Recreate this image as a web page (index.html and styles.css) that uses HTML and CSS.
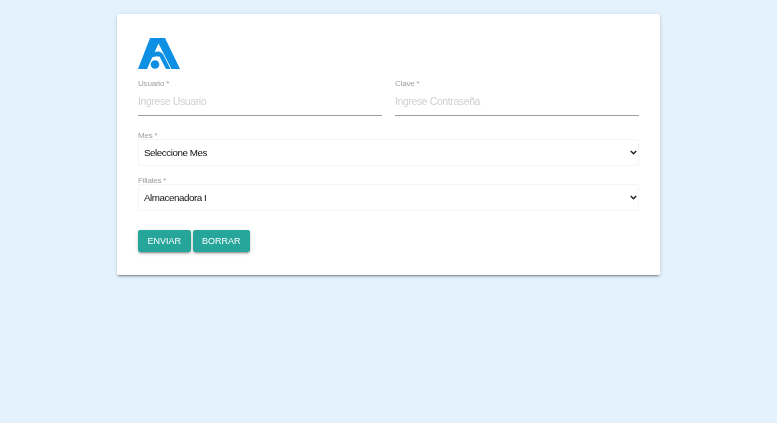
FILE: index.html
```html
<!DOCTYPE html>
<html lang="es">
<head>
<meta charset="utf-8">
<title>Ingreso</title>
<link rel="stylesheet" href="styles.css">
</head>
<body>
<main class="card">
  <svg class="logo" viewBox="0 0 42 31" aria-hidden="true">
    <path fill="#0d8fe3" d="M12 0H27L42 31H33.5L20.5 5.5L9 31H0Z"/>
    <path fill="#0d8fe3" d="M14 15.5Q17 13 21 13.5Q24 14 25.5 17L32.5 31H28L21.5 18.5H17.5Q15 18.5 12.8 20Z"/>
    <circle fill="#0d8fe3" cx="17" cy="26.5" r="4.3"/>
  </svg>
  <form class="form">
    <div class="row">
      <div class="field">
        <label class="label" for="u">Usuario *</label>
        <input class="input" id="u" type="text" placeholder="Ingrese Usuario">
      </div>
      <div class="field">
        <label class="label" for="c">Clave *</label>
        <input class="input" id="c" type="password" placeholder="Ingrese Contraseña">
      </div>
    </div>
    <div class="select-field first">
      <label class="label" for="m">Mes *</label>
      <select class="select" id="m"><option>Seleccione Mes</option></select>
    </div>
    <div class="select-field second">
      <label class="label" for="f">Filiales *</label>
      <select class="select" id="f"><option>Almacenadora I</option></select>
    </div>
    <div class="actions">
      <button class="btn" type="button">ENVIAR</button>
      <button class="btn" type="button">BORRAR</button>
    </div>
  </form>
</main>
</body>
</html>
```
FILE: styles.css
```css
* { box-sizing: border-box; }
html, body { margin: 0; height: 100%; }
body {
  background: #e3f2fd;
  font-family: "Liberation Sans", Arial, sans-serif;
  padding-top: 14px;
}
.card {
  width: 543px;
  height: 261px;
  margin-left: 117px;
  padding: 24px 21px 0;
  background: #fff;
  border-radius: 2px;
  box-shadow: 0 2px 2px 0 rgba(0,0,0,.14), 0 3px 1px -2px rgba(0,0,0,.2), 0 1px 5px 0 rgba(0,0,0,.12);
  filter: blur(.35px);
}
.logo { display: block; width: 42px; height: 31px; }
.row { display: grid; grid-template-columns: 244px 244px; column-gap: 13px; margin-top: 10px; }
.field { display: flex; flex-direction: column; }
.label { display: block; font-size: 8px; letter-spacing: -.2px; line-height: 10px; color: #9e9e9e; }
.input {
  height: 27px;
  padding: 0 0 3px;
  border: 0;
  border-bottom: 1px solid #9e9e9e;
  outline: 0;
  background: transparent;
  font: 10.5px "Liberation Sans", Arial, sans-serif;
  letter-spacing: -.4px;
}
.input::placeholder { color: #d0d0d0; opacity: 1; }
.select-field.first { margin-top: 15px; }
.select-field.second { margin-top: 10px; }
.select {
  display: block;
  width: 100%;
  height: 27px;
  margin-top: -2px;
  padding: 0 0 0 5px;
  border: 1px solid #f5f5f5;
  border-radius: 2px;
  appearance: none;
  background: #fff url("data:image/svg+xml,%3Csvg xmlns='http://www.w3.org/2000/svg' width='7' height='5'%3E%3Cpath d='M.8 1l2.7 2.7L6.2 1' fill='none' stroke='%23222' stroke-width='1.5'/%3E%3C/svg%3E") no-repeat right 1.5px center;
  color: #111;
  font: 9.8px "Liberation Sans", Arial, sans-serif;
  letter-spacing: -.45px;
  outline: 0;
}
.actions { display: flex; gap: 2px; margin-top: 19px; }
.btn {
  height: 22px;
  padding: 0 9.5px;
  border: 0;
  border-radius: 2px;
  background: #26a69a;
  color: #fff;
  font: 9px "Liberation Sans", Arial, sans-serif;
  box-shadow: 0 2px 2px 0 rgba(0,0,0,.14), 0 3px 1px -2px rgba(0,0,0,.2), 0 1px 5px 0 rgba(0,0,0,.12);
}
```
